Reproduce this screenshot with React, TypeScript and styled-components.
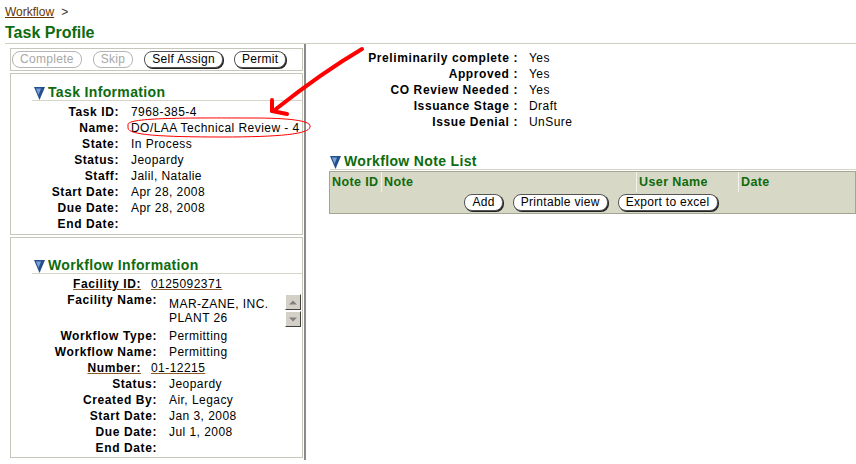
import React from 'react'
import styled, { createGlobalStyle } from 'styled-components'

const GlobalStyle = createGlobalStyle`
  body {
    margin: 0;
    background: #ffffff;
    font-family: "Liberation Sans", Arial, sans-serif;
    font-size: 12px;
    color: #000000;
  }
`

const Page = styled.div`
  position: relative;
  width: 856px;
  height: 464px;
  overflow: hidden;
`
const Crumb = styled.div`
  padding: 5px 0 0 5px;
  height: 15px;
  line-height: 14px;
`
const CrumbLink = styled.a`
  color: #663300;
  text-decoration: underline;
`
const CrumbSep = styled.span`
  margin-left: 7px;
  color: #333333;
`
const PageTitle = styled.h1`
  margin: 3px 0 0 5px;
  height: 20px;
  font-size: 16px;
  line-height: 20px;
  font-weight: bold;
  color: #0d6b0d;
`
const Rule = styled.div`
  margin-left: 5px;
  border-top: 1px solid #cfcfbf;
`
const Main = styled.div`
  display: flex;
  align-items: flex-start;
`
const LeftCol = styled.div`
  margin-left: 10px;
  width: 293px;
  padding: 4px 1px 2px 0;
  border-right: 2px solid #8a8a8a;
`
const Toolbar = styled.div`
  display: flex;
  align-items: center;
  gap: 11px;
  height: 21px;
  padding-left: 1px;
  border: 1px solid #c6c6ba;
`
const Button = styled.button<{ disabled?: boolean }>`
  height: 17px;
  padding: 0 7px;
  border-radius: 8px;
  background: #ffffff;
  font-family: "Liberation Sans", Arial, sans-serif;
  font-size: 12px;
  letter-spacing: 0.3px;
  line-height: 15px;
  color: ${p => (p.disabled ? '#a8a8a8' : '#000000')};
  border: 1px solid ${p => (p.disabled ? '#b4b4b4' : '#555555')};
  box-shadow: ${p => (p.disabled ? 'none' : '1px 1px 0 #222222')};
  cursor: pointer;
`
const InfoBox = styled.div<{ $top: number; $height: number; $gap: number }>`
  margin-top: ${p => p.$gap}px;
  height: ${p => p.$height}px;
  padding-top: ${p => p.$top}px;
  box-sizing: border-box;
  border: 1px solid #c6c6ba;
`
const SectionHead = styled.div<{ $left: number }>`
  display: flex;
  align-items: flex-end;
  gap: 3px;
  margin-left: ${p => p.$left}px;
  height: 15px;
  padding-left: 2px;
  border-bottom: 1px solid #d6d6c8;
`
const SectionTitle = styled.span`
  font-size: 14px;
  font-weight: bold;
  line-height: 15px;
  color: #0d6b0d;
  letter-spacing: 0.35px;
`
const Rows = styled.div<{ $top: number }>`
  margin-top: ${p => p.$top}px;
`
const Row = styled.div<{ $labelW: number; $tall?: boolean }>`
  display: grid;
  grid-template-columns: ${p => p.$labelW}px 1fr;
  column-gap: 12px;
  line-height: 16px;
  height: ${p => (p.$tall ? 36 : 16)}px;
`
const Label = styled.span<{ $link?: boolean }>`
  text-align: right;
  font-weight: bold;
  letter-spacing: 0.6px;
  white-space: nowrap;
  padding-right: ${p => (p.$link ? 16 : 0)}px;
  text-decoration: ${p => (p.$link ? 'underline' : 'none')};
  text-decoration-color: #8b5a2b;
`
const Value = styled.span<{ $link?: boolean }>`
  white-space: nowrap;
  letter-spacing: 0.45px;
  margin-left: ${p => (p.$link ? -18 : 0)}px;
  text-decoration: ${p => (p.$link ? 'underline' : 'none')};
  text-decoration-color: #8b5a2b;
`
const MultiValue = styled.div`
  display: flex;
  justify-content: space-between;
`
const MultiText = styled.div`
  padding-top: 5px;
  line-height: 14px;
  letter-spacing: 0.45px;
`
const Scroller = styled.div`
  display: flex;
  flex-direction: column;
  gap: 1px;
  margin-top: 2px;
  margin-right: 1px;
`
const ScrollBtn = styled.div`
  width: 16px;
  height: 16px;
  box-sizing: border-box;
  background: #d4d0c8;
  border: 1px solid;
  border-color: #ffffff #404040 #404040 #ffffff;
  display: flex;
  align-items: center;
  justify-content: center;
`
const RightCol = styled.div`
  flex: 1;
  padding-top: 6px;
`
const Props = styled.div`
  display: grid;
  grid-template-columns: 212px auto;
  column-gap: 11px;
  line-height: 16px;
`
const PropLabel = styled.span`
  text-align: right;
  font-weight: bold;
  letter-spacing: 0.6px;
  white-space: nowrap;
`
const PropValue = styled.span`
  letter-spacing: 0.45px;
`
const NoteHead = styled.div`
  margin: 23px 0 0 24px;
  display: flex;
  align-items: flex-end;
  gap: 3px;
  height: 16px;
  border-bottom: 1px solid #d6d6c8;
`
const NoteTable = styled.div`
  margin: 1px 0 0 23px;
  width: 525px;
  border: 1px solid #a4a494;
  background: #d8d8c6;
`
const HeadRow = styled.div`
  display: grid;
  grid-template-columns: 51px 255px 102px auto;
  height: 20px;
`
const HeadCell = styled.div<{ $sep?: boolean }>`
  padding-left: 2px;
  font-weight: bold;
  font-size: 12.5px;
  letter-spacing: 0.4px;
  line-height: 20px;
  color: #0d6b0d;
  border-left: ${p => (p.$sep ? '1px solid #f2f2ea' : 'none')};
`
const ButtonRow = styled.div`
  display: flex;
  justify-content: center;
  align-items: center;
  gap: 10px;
  height: 21px;
  padding-right: 3px;
`
const Overlay = styled.svg`
  position: absolute;
  left: 0;
  top: 0;
  pointer-events: none;
`

const Tri = () => (
  <svg width="11" height="13" viewBox="0 0 11 13">
    <polygon points="0,0 11,0 5.5,13" fill="#23508e" />
    <polygon points="2,1.5 7,1.5 4.5,8" fill="#7ea0d2" />
  </svg>
)

const Arrow = ({ up }: { up?: boolean }) => (
  <svg width="8" height="5" viewBox="0 0 8 5">
    <polygon points={up ? '0,4.5 8,4.5 4,0.5' : '0,0.5 8,0.5 4,4.5'} fill="#808080" />
  </svg>
)

const taskRows: [string, string][] = [
  ['Task ID:', '7968-385-4'],
  ['Name:', 'DO/LAA Technical Review - 4'],
  ['State:', 'In Process'],
  ['Status:', 'Jeopardy'],
  ['Staff:', 'Jalil, Natalie'],
  ['Start Date:', 'Apr 28, 2008'],
  ['Due Date:', 'Apr 28, 2008'],
  ['End Date:', ''],
]

const workflowRows: [string, string][] = [
  ['Workflow Type:', 'Permitting'],
  ['Workflow Name:', 'Permitting'],
]

const workflowTail: [string, string][] = [
  ['Status:', 'Jeopardy'],
  ['Created By:', 'Air, Legacy'],
  ['Start Date:', 'Jan 3, 2008'],
  ['Due Date:', 'Jul 1, 2008'],
  ['End Date:', ''],
]

const props: [string, string][] = [
  ['Preliminarily complete :', 'Yes'],
  ['Approved :', 'Yes'],
  ['CO Review Needed :', 'Yes'],
  ['Issuance Stage :', 'Draft'],
  ['Issue Denial :', 'UnSure'],
]

export default function App() {
  return (
    <Page>
      <GlobalStyle />
      <Crumb>
        <CrumbLink>Workflow</CrumbLink>
        <CrumbSep>&gt;</CrumbSep>
      </Crumb>
      <PageTitle>Task Profile</PageTitle>
      <Rule />
      <Main>
        <LeftCol>
          <Toolbar>
            <Button disabled>Complete</Button>
            <Button disabled>Skip</Button>
            <Button>Self Assign</Button>
            <Button>Permit</Button>
          </Toolbar>
          <InfoBox $gap={2} $top={11} $height={162}>
            <SectionHead $left={21}>
              <Tri />
              <SectionTitle>Task Information</SectionTitle>
            </SectionHead>
            <Rows $top={3}>
              {taskRows.map(([l, v]) => (
                <Row key={l} $labelW={108}>
                  <Label>{l}</Label>
                  <Value>{v}</Value>
                </Row>
              ))}
            </Rows>
          </InfoBox>
          <InfoBox $gap={2} $top={20} $height={221}>
            <SectionHead $left={21}>
              <Tri />
              <SectionTitle>Workflow Information</SectionTitle>
            </SectionHead>
            <Rows $top={2}>
              <Row $labelW={146}>
                <Label $link>Facility ID:</Label>
                <Value $link>0125092371</Value>
              </Row>
              <Row $labelW={146} $tall>
                <Label>Facility Name:</Label>
                <MultiValue>
                  <MultiText>
                    MAR-ZANE, INC.
                    <br />
                    PLANT 26
                  </MultiText>
                  <Scroller>
                    <ScrollBtn>
                      <Arrow up />
                    </ScrollBtn>
                    <ScrollBtn>
                      <Arrow />
                    </ScrollBtn>
                  </Scroller>
                </MultiValue>
              </Row>
              {workflowRows.map(([l, v]) => (
                <Row key={l} $labelW={146}>
                  <Label>{l}</Label>
                  <Value>{v}</Value>
                </Row>
              ))}
              <Row $labelW={146}>
                <Label $link>Number:</Label>
                <Value $link>01-12215</Value>
              </Row>
              {workflowTail.map(([l, v]) => (
                <Row key={l} $labelW={146}>
                  <Label>{l}</Label>
                  <Value>{v}</Value>
                </Row>
              ))}
            </Rows>
          </InfoBox>
        </LeftCol>
        <RightCol>
          <Props>
            {props.map(([l, v]) => (
              <React.Fragment key={l}>
                <PropLabel>{l}</PropLabel>
                <PropValue>{v}</PropValue>
              </React.Fragment>
            ))}
          </Props>
          <NoteHead>
            <Tri />
            <SectionTitle>Workflow Note List</SectionTitle>
          </NoteHead>
          <NoteTable>
            <HeadRow>
              <HeadCell>Note ID</HeadCell>
              <HeadCell $sep>Note</HeadCell>
              <HeadCell $sep>User Name</HeadCell>
              <HeadCell $sep>Date</HeadCell>
            </HeadRow>
            <ButtonRow>
              <Button>Add</Button>
              <Button>Printable view</Button>
              <Button>Export to excel</Button>
            </ButtonRow>
          </NoteTable>
        </RightCol>
      </Main>
      <Overlay width="856" height="464" viewBox="0 0 856 464">
        <path
          d="M128,124 C131,117 200,118 252,118 C292,118 312,121 310,127 C309,134 280,137 222,137 C162,137 128,135 128,128 Z"
          fill="none"
          stroke="#ff0000"
          strokeWidth="1"
        />
        <g stroke="#ff0000" strokeWidth="4" strokeLinecap="round" fill="none">
          <path d="M362,49 C340,62 305,86 276,109" />
          <path d="M272,111 L272,100" />
          <path d="M272,111 L287,114" />
        </g>
      </Overlay>
    </Page>
  )
}
